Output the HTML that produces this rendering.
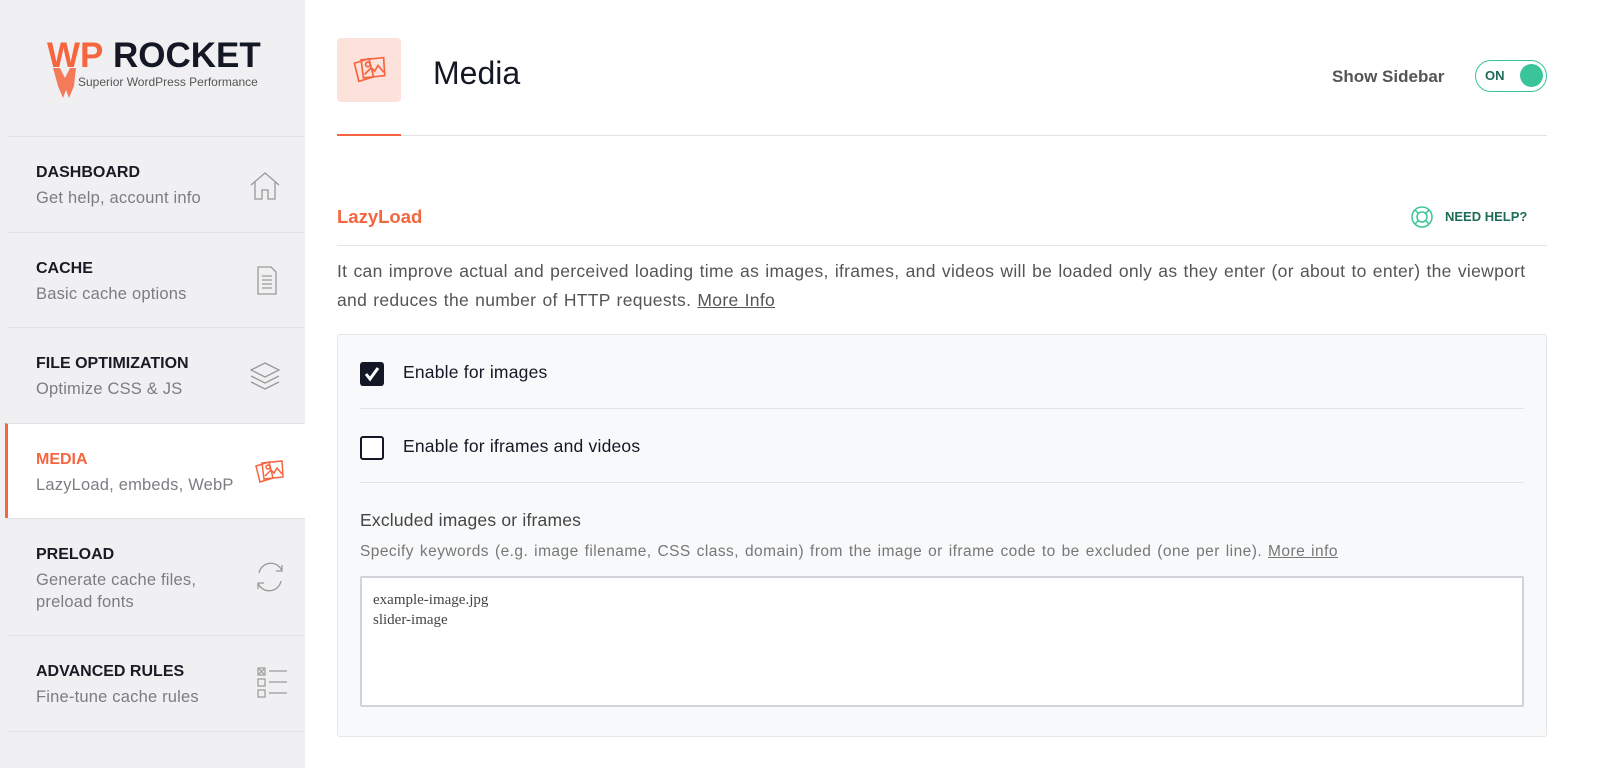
<!DOCTYPE html>
<html><head><meta charset="utf-8"><style>
*{box-sizing:border-box;margin:0;padding:0}
body{width:1600px;height:768px;overflow:hidden;background:#fff;font-family:"Liberation Sans",sans-serif;position:relative}
.sb{position:absolute;left:0;top:0;width:305px;height:768px;background:#f0f0f2}
.logo{position:absolute;left:47px;top:34px}
.item{position:absolute;left:7px;width:298px;border-top:1px solid #e1e2e5}
.item .t{position:absolute;left:29px;font-size:16px;font-weight:bold;color:#1a1a24}
.item .s{position:absolute;left:29px;font-size:16.5px;color:#7b7d82;line-height:22px;letter-spacing:.2px}
.item svg{position:absolute;left:242px}
.main{position:absolute;left:305px;top:0;right:0;bottom:0}
</style></head><body>
<div class="sb">
 <div class="logo">
  <svg width="230" height="70" viewBox="0 0 230 70">
   <text x="0" y="33" font-family="Liberation Sans" font-weight="bold" font-size="35" fill="#f56640">WP</text>
   <text x="66" y="33" font-family="Liberation Sans" font-weight="bold" font-size="35" fill="#141824">ROCKET</text>
   <path d="M6 34 L13 34 L18 44 L23 34 L29 34 L27 52 L22 64 L19 56 L16 64 L11 52Z" fill="#f56640" opacity=".85"/>
   <text x="31" y="52" font-family="Liberation Sans" font-size="12" fill="#555">Superior WordPress Performance</text>
  </svg>
 </div>
 <div class="item" style="top:136px;height:96px"><div class="t" style="top:27px">DASHBOARD</div><div class="s" style="top:50px">Get help, account info</div>
  <svg style="top:34px" width="32" height="30" viewBox="0 0 32 30" fill="none" stroke="#999" stroke-width="1.3"><path d="M2 14 L16 2 L30 14 M6 11 V28 H13 V19 H19 V28 H26 V11"/></svg></div>
 <div class="item" style="top:232px;height:95px"><div class="t" style="top:27px">CACHE</div><div class="s" style="top:50px">Basic cache options</div>
  <svg style="top:30px;left:247px" width="26" height="34" viewBox="0 0 26 34" fill="none" stroke="#999" stroke-width="1.3"><path d="M4 4 H17 L22 9 V31 H4Z M8 13 H18 M8 17 H18 M8 21 H18 M8 25 H18"/></svg></div>
 <div class="item" style="top:327px;height:96px"><div class="t" style="top:27px">FILE OPTIMIZATION</div><div class="s" style="top:50px">Optimize CSS &amp; JS</div>
  <svg style="top:32px" width="32" height="32" viewBox="0 0 32 32" fill="none" stroke="#999" stroke-width="1.3"><path d="M16 3 L30 10 L16 17 L2 10Z M2 16 L16 23 L30 16 M2 22 L16 29 L30 22"/></svg></div>
 <div class="item" style="top:423px;height:95px;background:#fff;border-left:3px solid #f56640;left:5px;width:300px"><div class="t" style="top:27px;left:28px;color:#f56640">MEDIA</div><div class="s" style="top:50px;left:28px">LazyLoad, embeds, WebP</div>
  <svg style="top:34px;left:245px" width="32" height="28" viewBox="0 0 32 28" fill="none" stroke="#f56640" stroke-width="1.5"><path d="M3 8 L16 4 L20 20 L7 24Z"/><path d="M9 5 L29 3 L30 19 L11 21Z"/><circle cx="15" cy="9" r="2"/><path d="M12 18 L18 12 L21 15 L24 10 L29 16"/></svg></div>
 <div class="item" style="top:518px;height:117px"><div class="t" style="top:27px">PRELOAD</div><div class="s" style="top:50px">Generate cache files,<br>preload fonts</div>
  <svg style="top:42px;left:246px" width="34" height="32" viewBox="0 0 34 32" fill="none" stroke="#999" stroke-width="1.3"><path d="M6 12 A12 12 0 0 1 29 10 M29 4 V10 H23 M28 20 A12 12 0 0 1 5 22 M5 28 V22 H11"/></svg></div>
 <div class="item" style="top:635px;height:96px"><div class="t" style="top:27px">ADVANCED RULES</div><div class="s" style="top:50px">Fine-tune cache rules</div>
  <svg style="top:30px;left:250px" width="32" height="34" viewBox="0 0 32 34" fill="none" stroke="#999" stroke-width="1.2"><rect x="1" y="2" width="7" height="7"/><rect x="1" y="13" width="7" height="7"/><rect x="1" y="24" width="7" height="7"/><path d="M2 3 L7 8 M7 3 L2 8 M12 5 H30 M12 16 H30 M12 27 H30"/></svg></div>
 <div class="item" style="top:731px;height:40px"></div>
</div>
<div class="main">
 <div style="position:absolute;left:32px;top:38px;width:64px;height:64px;background:#fde2dc;border-radius:4px">
  <svg style="position:absolute;left:14px;top:16px" width="36" height="32" viewBox="0 0 32 28" fill="none" stroke="#f56640" stroke-width="1.5"><path d="M3 8 L16 4 L20 20 L7 24Z"/><path d="M9 5 L29 3 L30 19 L11 21Z"/><circle cx="15" cy="9" r="2"/><path d="M12 18 L18 12 L21 15 L24 10 L29 16"/></svg></div>
 <div style="position:absolute;left:128px;top:55px;font-size:32px;color:#141824">Media</div>
 <div style="position:absolute;left:1027px;top:67px;font-size:17px;font-weight:bold;color:#555">Show Sidebar</div>
 <div style="position:absolute;left:1170px;top:60px;width:72px;height:32px;border:1.5px solid #3ac49a;border-radius:16px">
  <span style="position:absolute;left:9px;top:7px;font-size:13px;font-weight:bold;color:#1e6b57">ON</span>
  <span style="position:absolute;right:3px;top:3px;width:23px;height:23px;border-radius:50%;background:#3ac49a"></span></div>
 <div style="position:absolute;left:32px;top:135px;width:1210px;height:1px;background:#e3e4e7"></div>
 <div style="position:absolute;left:32px;top:134px;width:64px;height:2px;background:#f56640"></div>
 <div style="position:absolute;left:32px;top:206px;font-size:18.5px;font-weight:bold;color:#f56640">LazyLoad</div>
 <svg style="position:absolute;left:1105px;top:205px" width="24" height="24" viewBox="0 0 24 24" fill="none" stroke="#3ac49a" stroke-width="1.5"><circle cx="12" cy="12" r="10"/><circle cx="12" cy="12" r="5"/><path d="M5 5 L8.5 8.5 M19 5 L15.5 8.5 M5 19 L8.5 15.5 M19 19 L15.5 15.5"/></svg>
 <div style="position:absolute;left:1140px;top:209px;font-size:13px;font-weight:bold;color:#1e6b57">NEED HELP?</div>
 <div style="position:absolute;left:32px;top:245px;width:1210px;height:1px;background:#e3e4e7"></div>
 <div style="position:absolute;left:32px;top:257px;white-space:nowrap;font-size:17.5px;letter-spacing:.3px;word-spacing:1px;line-height:29px;color:#555">It can improve actual and perceived loading time as images, iframes, and videos will be loaded only as they enter (or about to enter) the viewport<br>and reduces the number of HTTP requests. <u>More Info</u></div>
 <div style="position:absolute;left:32px;top:334px;width:1210px;height:403px;background:#f8f9fa;border:1px solid #e6e7e9;border-radius:3px">
  <div style="position:absolute;left:22px;top:27px;width:24px;height:24px;background:#141824;border-radius:3px"><svg width="24" height="24" viewBox="0 0 24 24"><path d="M6 12 L10 17 L18 6" fill="none" stroke="#fff" stroke-width="3"/></svg></div>
  <div style="position:absolute;left:65px;top:27px;font-size:17.5px;letter-spacing:.2px;color:#141824">Enable for images</div>
  <div style="position:absolute;left:22px;top:73px;width:1164px;height:1px;background:#e3e4e7"></div>
  <div style="position:absolute;left:22px;top:101px;width:24px;height:24px;border:2px solid #141824;border-radius:3px;background:#fff"></div>
  <div style="position:absolute;left:65px;top:101px;font-size:17.5px;letter-spacing:.2px;color:#141824">Enable for iframes and videos</div>
  <div style="position:absolute;left:22px;top:147px;width:1164px;height:1px;background:#e3e4e7"></div>
  <div style="position:absolute;left:22px;top:175px;font-size:17.5px;letter-spacing:.2px;color:#444">Excluded images or iframes</div>
  <div style="position:absolute;left:22px;top:208px;white-space:nowrap;font-size:15.5px;letter-spacing:.45px;word-spacing:1.2px;color:#777">Specify keywords (e.g. image filename, CSS class, domain) from the image or iframe code to be excluded (one per line). <u>More info</u></div>
  <div style="position:absolute;left:22px;top:241px;width:1164px;height:131px;background:#fff;border:2px solid #d0d4d8;border-radius:2px;padding:12px 11px;font-family:'Liberation Serif',serif;font-size:15px;line-height:20px;color:#444">example-image.jpg<br>slider-image</div>
 </div>
</div>
</body></html>
